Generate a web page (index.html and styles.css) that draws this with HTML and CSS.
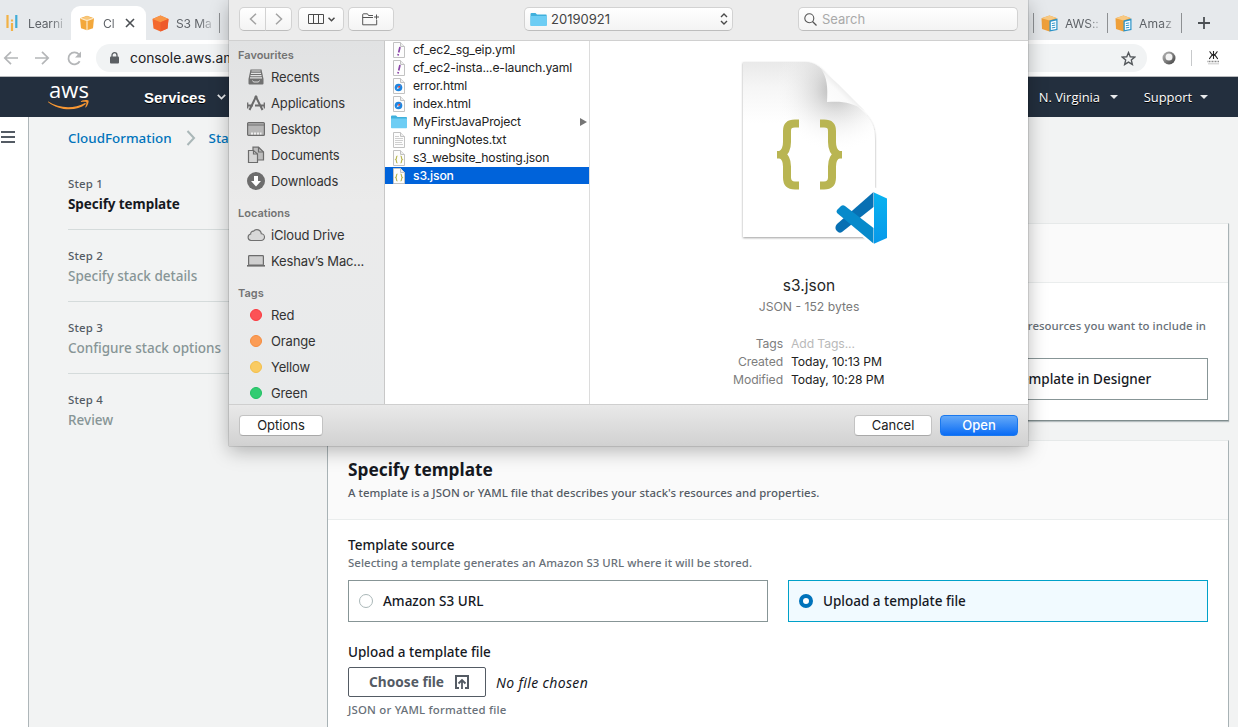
FILE: index.html
```html
<!DOCTYPE html>
<html lang="en">
<head>
<meta charset="utf-8">
<title>CloudFormation - Stack</title>
<link rel="stylesheet" href="styles.css">
</head>
<body>
<div class="browser">
  <div class="tabs">
    <div class="tab tab-first">
      <svg width="12" height="18" viewBox="0 0 12 18"><path d="M1.500 1v13M6 5.500v2M6 9v8" stroke="#f2b246" stroke-width="2.200"/><path d="M10.300 1v13" stroke="#41acd8" stroke-width="2.200"/></svg>
      <span class="tab-title">Learni</span>
    </div>
    <div class="tab tab-active">
      <svg width="16" height="16" viewBox="0 0 16 16"><path d="M8 .8 15 3.300 14 13.300 8 15.300 2 13.300 1 3.300z" fill="#f3a83b"/><path d="M8 1 14 3.400 8 5.200 2 3.400z" fill="#f8c77b"/><path d="M1.500 3.300 8 5.500l6.500-2.200M8 5.500V15" stroke="#fde9c8" stroke-width="1.200" fill="none"/></svg>
      <span class="tab-title tab-title-short">Cl</span>
      <svg class="tab-close" width="10" height="10" viewBox="0 0 10 10"><path d="m1 1 8 8M9 1 1 9" stroke="#4b4f53" stroke-width="1.600"/></svg>
    </div>
    <div class="tab tab-s3">
      <svg width="17" height="17" viewBox="0 0 17 17"><path d="m8.500.5 8 3.500-1 9.500-7 3-7-3L.5 4z" fill="#f4692f"/><path d="m8.500.5 8 3.500-8 3.200L.5 4z" fill="#f99646"/><path d="M8.500 7.200 16.500 4l-1 9.500-7 3z" fill="#ee5a2b"/></svg>
      <span class="tab-title">S3 Ma</span>
    </div>
    <i class="tab-sep"></i>
    <div class="tabs-end">
      <i class="tab-sep"></i>
      <div class="tab tab-doc">
        <svg width="17" height="17" viewBox="0 0 17 17"><path d="M8.500.5 15.500 3l-1 11-6 2.500L1 14 .5 3.300z" fill="#efa03a"/><path d="m8.500.5 7 2.600-7 2.400L.5 3.300z" fill="#f8c982"/><path d="M8.500 5.500 16.500 3.500v11.500l-8 1.500z" fill="#2b93c8"/><path d="m9.800 6.700 5.500-1.300v8.600l-5.500 1z" fill="#fff"/><path d="m10.800 8.500 3.500-.6M10.800 10.700l3.500-.6M10.800 12.900l3.500-.6" stroke="#2b93c8" stroke-width="1"/></svg>
        <span class="tab-title">AWS::</span>
      </div>
      <i class="tab-sep"></i>
      <div class="tab tab-doc">
        <svg width="17" height="17" viewBox="0 0 17 17"><path d="M8.500.5 15.500 3l-1 11-6 2.500L1 14 .5 3.300z" fill="#efa03a"/><path d="m8.500.5 7 2.600-7 2.400L.5 3.300z" fill="#f8c982"/><path d="M8.500 5.500 16.500 3.500v11.500l-8 1.500z" fill="#2b93c8"/><path d="m9.800 6.700 5.500-1.300v8.600l-5.500 1z" fill="#fff"/><path d="m10.800 8.500 3.500-.6M10.800 10.700l3.500-.6M10.800 12.900l3.500-.6" stroke="#2b93c8" stroke-width="1"/></svg>
        <span class="tab-title tab-title-amz">Amaz</span>
      </div>
      <i class="tab-sep"></i>
      <svg class="tab-add" width="12" height="12" viewBox="0 0 12 12"><path d="M6 0v12M0 6h12" stroke="#4c5054" stroke-width="1.800"/></svg>
    </div>
  </div>

  <div class="address-row">
    <svg class="nav-back" width="15" height="14" viewBox="0 0 15 14"><path d="M15 7H2M8 .8 1.800 7 8 13.200" fill="none" stroke="#b4b6b8" stroke-width="1.700"/></svg>
    <svg class="nav-fwd" width="15" height="14" viewBox="0 0 15 14"><path d="M0 7h13M7 .8 13.200 7 7 13.200" fill="none" stroke="#b4b6b8" stroke-width="1.700"/></svg>
    <svg class="nav-reload" width="15" height="15" viewBox="0 0 15 15"><path d="M12.700 10.300A6 6 0 1 1 11.900 3.300" fill="none" stroke="#b4b6b8" stroke-width="1.800"/><path d="M14 .5v6H8z" fill="#b4b6b8"/></svg>
    <div class="omnibox">
      <svg width="9" height="12" viewBox="0 0 9 12"><rect y="4.500" width="9" height="7" rx="1" fill="#5b5f63"/><path d="M2 5V3.200a2.500 2.500 0 0 1 5 0V5" fill="none" stroke="#5b5f63" stroke-width="1.300"/></svg>
      <span class="url">console.aws.am</span>
      <svg class="star" width="15" height="15" viewBox="0 0 24 24"><path d="m12 2.500 2.800 6.700 7.200.6-5.500 4.700 1.700 7L12 17.700l-6.200 3.800 1.700-7L2 9.800l7.200-.6z" fill="none" stroke="#55595d" stroke-width="2.200"/></svg>
    </div>
    <svg class="ext-ball" width="14" height="14" viewBox="0 0 14 14"><defs><linearGradient id="ball" x1="0" y1="0" x2="1" y2="1"><stop offset=".2" stop-color="#a4a4a4"/><stop offset="1" stop-color="#3d3d3d"/></linearGradient></defs><circle cx="7" cy="7" r="6.500" fill="url(#ball)"/><circle cx="7" cy="6" r="3.500" fill="#f3f3f3"/></svg>
    <i class="ext-sep"></i>
    <svg class="ext-zh" width="13" height="14" viewBox="0 0 13 14"><path d="M6.500 0v8M2.500.5c1 0 1 3.400 3.800 3.400C3.500 4 3.300 7.800 2 7.800M10.500.5c-1 0-1 3.400-3.800 3.400C9.500 4 9.700 7.800 11 7.800" fill="none" stroke="#222" stroke-width="1.100"/><path d="M.5 10.500h12" stroke="#8a8a8a" stroke-width="1.600" stroke-dasharray="1 .5"/><path d="M1 12.800h11" stroke="#bbb" stroke-width=".8"/></svg>
  </div>
</div>

<div class="aws-nav">
  <div class="aws-logo">
    <span class="aws-word">aws</span>
    <svg width="42" height="11" viewBox="0 0 42 11"><path d="M.3 1.500C11 8.500 26 9 36.500 3.200c1-.5 1.800.5 1 1.100C29 11.500 11 11.200.3 2.300c-.6-.5-.4-1 0-.8z" fill="#f79733"/><path d="M33 1.200c2-1.400 7-1.600 7.500-.6.500 1.100-.7 5-2.500 6.700-.5.400-.9.200-.7-.3.700-1.800 1.500-4.100 1-4.700-.6-.700-3.200-.500-4.900-.300-.6.100-.8-.500-.400-.800z" fill="#f79733"/></svg>
  </div>
  <span class="services">Services</span>
  <svg class="services-caret" width="9" height="6" viewBox="0 0 9 6"><path d="m.8.8 3.700 3.700L8.200.8" fill="none" stroke="#e8eaec" stroke-width="1.700"/></svg>
  <span class="nav-item nav-region">N. Virginia</span><i class="caret"></i>
  <span class="nav-item nav-support">Support</span><i class="caret"></i>
</div>

<div class="page">
  <div class="rail">
    <svg width="14" height="12" viewBox="0 0 14 12"><path d="M0 1h14M0 6h14M0 11h14" stroke="#545b64" stroke-width="2"/></svg>
  </div>
  <div class="steps">
    <div class="crumbs">
      <span class="crumb">CloudFormation</span>
      <svg width="10" height="16" viewBox="0 0 10 16"><path d="m1.500 1 6.500 7-6.500 7" fill="none" stroke="#aab7b8" stroke-width="2"/></svg>
      <span class="crumb">Stacks</span>
    </div>
    <div class="step step-current"><div class="step-no">Step 1</div><div class="step-name">Specify template</div></div>
    <div class="step"><div class="step-no">Step 2</div><div class="step-name">Specify stack details</div></div>
    <div class="step"><div class="step-no">Step 3</div><div class="step-name">Configure stack options</div></div>
    <div class="step"><div class="step-no">Step 4</div><div class="step-name">Review</div></div>
  </div>
  <div class="main">
    <div class="card card-prepare">
      <div class="card-head"></div>
      <div class="card-body">
        <div class="hint hint-end">resources you want to include in</div>
        <div class="tiles tiles-three">
          <div class="tile tile-designer"><span class="tile-label">Create template in Designer</span></div>
        </div>
      </div>
    </div>
    <div class="card card-specify">
      <div class="card-head">
        <div class="card-title">Specify template</div>
        <div class="card-desc">A template is a JSON or YAML file that describes your stack's resources and properties.</div>
      </div>
      <div class="card-body">
        <div class="label label-source">Template source</div>
        <div class="hint hint-source">Selecting a template generates an Amazon S3 URL where it will be stored.</div>
        <div class="tiles">
          <div class="tile"><i class="radio"></i><span class="tile-label">Amazon S3 URL</span></div>
          <div class="tile tile-on"><i class="radio radio-on"></i><span class="tile-label">Upload a template file</span></div>
        </div>
        <div class="label label-upload">Upload a template file</div>
        <div class="upload">
          <div class="choose"><span>Choose file</span>
            <svg width="14" height="14" viewBox="0 0 14 14"><path d="M4 13H1V1h12v12h-3" fill="none" stroke="#545b64" stroke-width="2"/><path d="M7 14V5.500M3.500 8.500 7 5l3.500 3.500" fill="none" stroke="#545b64" stroke-width="1.800"/></svg>
          </div>
          <span class="no-file">No file chosen</span>
        </div>
        <div class="hint hint-format">JSON or YAML formatted file</div>
      </div>
    </div>
  </div>
</div>

<div class="dialog">
  <div class="toolbar">
    <div class="tb-btn tb-back"><svg width="8" height="12" viewBox="0 0 8 12"><path d="M7 .8 1.500 6 7 11.200" fill="none" stroke="#a3a3a3" stroke-width="1.500"/></svg></div>
    <div class="tb-btn tb-fwd"><svg width="8" height="12" viewBox="0 0 8 12"><path d="M1 .8 6.500 6 1 11.200" fill="none" stroke="#a3a3a3" stroke-width="1.500"/></svg></div>
    <div class="tb-btn tb-view">
      <svg width="16" height="10" viewBox="0 0 16 10"><path d="M.5.5h15v9H.5zM5.500.5v9M10.500.5v9" fill="none" stroke="#4a4a4a"/></svg>
      <svg width="7" height="5" viewBox="0 0 7 5"><path d="m.5.8 3 3 3-3" fill="none" stroke="#4a4a4a" stroke-width="1.500"/></svg>
    </div>
    <div class="tb-btn tb-new"><svg width="18" height="13" viewBox="0 0 18 13"><path d="M11 2.500H6.500L5.500.800H1.500Q.7.800.7 1.800v10h14V7M.7 4.500H11M14.500 1.500v5M12 4h5" fill="none" stroke="#555"/></svg></div>
    <div class="tb-btn tb-folder">
      <svg width="17" height="15" viewBox="0 0 17 15"><path d="M.5 2Q.5 1 1.500 1h4l1.500 1.500h9q.7 0 .7.700V13.500H.5z" fill="#3fb0dc"/><path d="M.5 4h16.200v9.300q0 .7-.7.700H1.200q-.7 0-.7-.7z" fill="#6dcdf4"/></svg>
      <span>20190921</span>
      <svg class="updown" width="8" height="12" viewBox="0 0 8 12"><path d="m1 4 3-3 3 3M1 8l3 3 3-3" fill="none" stroke="#4a4a4a" stroke-width="1.400"/></svg>
    </div>
    <div class="tb-btn tb-search">
      <svg width="13" height="13" viewBox="0 0 13 13"><circle cx="5.300" cy="5.300" r="4.500" fill="none" stroke="#555" stroke-width="1.100"/><path d="m8.500 8.500 4 4" stroke="#555" stroke-width="1.300"/></svg>
      <span>Search</span>
    </div>
  </div>
  <div class="panes">
    <div class="sidebar">
      <div class="side-head">Favourites</div>
      <div class="side-item"><svg width="18" height="18" viewBox="0 0 18 18"><path d="M3.500 1.500h11l2 9.500v4.500q0 1-1 1h-13q-1 0-1-1V11z" fill="#717171"/><path d="M4.500 3h9M4 5.300h10M3.500 7.600h11M3 9.900h12" stroke="#e2e2e2" stroke-width="1.200"/><path d="M5.500 12.500q.5 1.500 1.500 1.500h4q1 0 1.500-1.500" stroke="#ddd" fill="none"/></svg>Recents</div>
      <div class="side-item"><svg width="18" height="18" viewBox="0 0 18 18"><path d="M9.300 2 2.500 16M8.500 2 15.500 16M1 11.500h5M8 11.500h9" fill="none" stroke="#6b6b6b" stroke-width="2"/><path d="M.7 8.500v6M17.300 8.500v6" stroke="#6b6b6b" stroke-width="1.300"/><circle cx="9" cy="3" r="1.500" fill="#6b6b6b"/></svg>Applications</div>
      <div class="side-item"><svg width="18" height="18" viewBox="0 0 18 18"><rect x=".6" y="2.600" width="16.800" height="12.800" rx="1" fill="#b6b6b6" stroke="#6c6c6c" stroke-width="1.200"/><path d="M1 5h16" stroke="#6c6c6c"/><path d="M4 13.500h2M7 13.500h2M10 13.500h2M13 13.500h1.500" stroke="#eee" stroke-width="2"/></svg>Desktop</div>
      <div class="side-item"><svg width="18" height="18" viewBox="0 0 18 18"><path d="M6 1.200h5.500L16.500 6v8H6z" fill="#bdbdbd" stroke="#6c6c6c" stroke-width="1.200"/><path d="M11.500 1.200V6h5" fill="none" stroke="#6c6c6c" stroke-width="1.200"/><path d="M1.500 4.500h5L10.500 8v8.500h-9z" fill="#d5d5d5" stroke="#6c6c6c" stroke-width="1.200"/><path d="M6.500 4.500V8h4" fill="none" stroke="#6c6c6c" stroke-width="1.200"/></svg>Documents</div>
      <div class="side-item"><svg width="18" height="18" viewBox="0 0 18 18"><circle cx="9" cy="9" r="9" fill="#6d6d6d"/><path d="M7 4h4v5h3l-5 5.500L4 9h3z" fill="#fff"/></svg>Downloads</div>
      <div class="side-head side-gap">Locations</div>
      <div class="side-item"><svg width="18" height="18" viewBox="0 0 18 18"><path d="M4 14.500a3.300 3.300 0 0 1-.3-6.500 2.500 2.500 0 0 1 3-2.800 4.300 4.300 0 0 1 7.600 2.600 3.300 3.300 0 0 1-.3 6.700z" fill="#d8d8d8" stroke="#717171" stroke-width="1.100"/></svg>iCloud Drive</div>
      <div class="side-item"><svg width="18" height="18" viewBox="0 0 18 18"><rect x="1.600" y="3.600" width="14.800" height="9.500" rx=".8" fill="#cfcfcf" stroke="#6c6c6c" stroke-width="1.200"/><path d="M0 13.800h18" stroke="#6c6c6c" stroke-width="1.600"/></svg>Keshav’s Mac...</div>
      <div class="side-head side-gap">Tags</div>
      <div class="side-item"><i class="dot dot-red"></i>Red</div>
      <div class="side-item"><i class="dot dot-orange"></i>Orange</div>
      <div class="side-item"><i class="dot dot-yellow"></i>Yellow</div>
      <div class="side-item"><i class="dot dot-green"></i>Green</div>
    </div>
    <div class="files">
      <div class="file"><svg width="16" height="16" viewBox="0 0 16 16"><path d="M2.500.5h7l4 4v11h-11z" fill="#fdfdfd" stroke="#c2c2c2"/><path d="M9.500.5v4h4" fill="#eee" stroke="#c2c2c2"/><path d="m9 5-1.300 5.500M7.300 12l-.3 1.500" stroke="#8a45a8" stroke-width="1.700"/></svg>cf_ec2_sg_eip.yml</div>
      <div class="file"><svg width="16" height="16" viewBox="0 0 16 16"><path d="M2.500.5h7l4 4v11h-11z" fill="#fdfdfd" stroke="#c2c2c2"/><path d="M9.500.5v4h4" fill="#eee" stroke="#c2c2c2"/><path d="m9 5-1.300 5.500M7.300 12l-.3 1.500" stroke="#8a45a8" stroke-width="1.700"/></svg>cf_ec2-insta...e-launch.yaml</div>
      <div class="file"><svg width="16" height="16" viewBox="0 0 16 16"><path d="M2.500.5h7l4 4v11h-11z" fill="#fdfdfd" stroke="#c2c2c2"/><path d="M9.500.5v4h4" fill="#eee" stroke="#c2c2c2"/><circle cx="7.500" cy="9.500" r="3.800" fill="#1d85e0"/><path d="M9.500 7.500 8.200 10.200 5.500 11.500l1.300-2.700z" fill="#cfe5f8"/><path d="M9.700 7.300 8.200 10.200 6.800 8.800z" fill="#e5382c"/></svg>error.html</div>
      <div class="file"><svg width="16" height="16" viewBox="0 0 16 16"><path d="M2.500.5h7l4 4v11h-11z" fill="#fdfdfd" stroke="#c2c2c2"/><path d="M9.500.5v4h4" fill="#eee" stroke="#c2c2c2"/><circle cx="7.500" cy="9.500" r="3.800" fill="#1d85e0"/><path d="M9.500 7.500 8.200 10.200 5.500 11.500l1.300-2.700z" fill="#cfe5f8"/><path d="M9.700 7.300 8.200 10.200 6.800 8.800z" fill="#e5382c"/></svg>index.html</div>
      <div class="file"><svg width="16" height="16" viewBox="0 0 16 16"><path d="M0 2.500q0-1 1-1h4L6.500 3H15q1 0 1 .8V13H0z" fill="#3fb0dc"/><path d="M0 4.500h16v9q0 .8-.8.800H.8q-.8 0-.8-.8z" fill="#6dcdf4"/></svg>MyFirstJavaProject<i class="expand"></i></div>
      <div class="file"><svg width="16" height="16" viewBox="0 0 16 16"><path d="M2.500.5h7l4 4v11h-11z" fill="#fdfdfd" stroke="#c2c2c2"/><path d="M9.500.5v4h4" fill="#eee" stroke="#c2c2c2"/><path d="M4 4.500h4M4 6.500h8M4 8.500h8M4 10.500h7M4 12.500h8" stroke="#cfcfcf"/></svg>runningNotes.txt</div>
      <div class="file"><svg width="16" height="16" viewBox="0 0 16 16"><path d="M2.500.5h7l4 4v11h-11z" fill="#fdfdfd" stroke="#c2c2c2"/><path d="M9.500.5v4h4" fill="#eee" stroke="#c2c2c2"/><path d="M6.500 6Q5.500 6 5.500 7.500T4.700 9.500q.8.500.8 2t1 1.500M9.500 6q1 0 1 1.500t.8 2q-.8.500-.8 2t-1 1.500" fill="none" stroke="#b9b652" stroke-width="1.200"/></svg>s3_website_hosting.json</div>
      <div class="file file-on"><svg width="16" height="16" viewBox="0 0 16 16"><path d="M2.500.5h7l4 4v11h-11z" fill="#fdfdfd" stroke="#c2c2c2"/><path d="M9.500.5v4h4" fill="#eee" stroke="#c2c2c2"/><path d="M6.500 6Q5.500 6 5.500 7.500T4.700 9.500q.8.500.8 2t1 1.500M9.500 6q1 0 1 1.500t.8 2q-.8.500-.8 2t-1 1.500" fill="none" stroke="#b9b652" stroke-width="1.200"/></svg>s3.json</div>
    </div>
    <div class="preview">
      <svg class="doc" width="160" height="192" viewBox="0 0 160 192">
        <defs>
          <linearGradient id="sheet" x1="0" y1="0" x2="0" y2="1"><stop offset="0" stop-color="#e9e9e9"/><stop offset=".15" stop-color="#f6f6f6"/><stop offset=".35" stop-color="#fff"/></linearGradient>
          <radialGradient id="fold" gradientUnits="userSpaceOnUse" cx="100" cy="34" r="62"><stop offset="0" stop-color="#999" stop-opacity=".75"/><stop offset=".35" stop-color="#c0c0c0" stop-opacity=".45"/><stop offset="1" stop-color="#fff" stop-opacity="0"/></radialGradient>
          <linearGradient id="curl" x1="0" y1="1" x2=".7" y2=".3"><stop offset="0" stop-color="#fff"/><stop offset=".6" stop-color="#fafafa"/><stop offset="1" stop-color="#d5d5d5"/></linearGradient>
          <linearGradient id="code" x1="0" y1="0" x2="0" y2="1"><stop offset="0" stop-color="#09b3f0"/><stop offset="1" stop-color="#0799ea"/></linearGradient>
          <filter id="drop" x="-10%" y="-10%" width="120%" height="120%"><feDropShadow dx="0" dy="1" stdDeviation="1.200" flood-color="#000" flood-opacity=".38"/></filter>
        </defs>
        <path d="M7 6h61c13 0 18 7 26 16l23 24c16 15 22 20 22 38v97H7z" fill="url(#sheet)" filter="url(#drop)"/>
        <path d="M7 6h61c13 0 18 7 26 16l23 24c16 15 22 20 22 38v97H7z" fill="url(#fold)"/>
        <path d="M85 13c6 8 7 18 6 33 15-1 25 0 38 9L102 28z" fill="url(#curl)"/>
        <path d="M63 67.500h-4q-8 0-8 7.500v11q0 9.500-6 12.500 6 3 6 12v11q0 8 8 8h4" fill="none" stroke="#b9b552" stroke-width="8" stroke-linejoin="bevel"/>
        <path d="M84 67.500h4q8 0 8 7.500v11q0 9.500 6 12.500-6 3-6 12v11q0 8-8 8h-4" fill="none" stroke="#b9b552" stroke-width="8" stroke-linejoin="bevel"/>
        <path d="M41 95h6v7.500h-6zM106 95h-6v7.500h6z" fill="#b9b552"/>
        <path d="M99 147 107 142 117 148 138 131 155 139v43l-17 9-23-20-8 7-9-7z" fill="#fff"/>
        <path d="m101 168 36.500-32v15L106 176q-2 1.500-4 0l-2-2q-1.500-3 1-6z" fill="#0870b3"/>
        <path d="m101 154 4-4q2-1.500 4 0l28.500 22v15.500L101 157q-1-1.500 0-3z" fill="#078acb"/>
        <path d="M138 136.500 151 142.500v39.500l-13 5.700z" fill="url(#code)"/>
      </svg>
      <div class="pv-name">s3.json</div>
      <div class="pv-kind">JSON - 152 bytes</div>
      <div class="pv-meta">
        <span class="k">Tags</span><span class="v add">Add Tags...</span>
        <span class="k">Created</span><span class="v">Today, 10:13 PM</span>
        <span class="k">Modified</span><span class="v">Today, 10:28 PM</span>
      </div>
    </div>
  </div>
  <div class="foot">
    <div class="btn btn-options">Options</div>
    <div class="btn btn-cancel">Cancel</div>
    <div class="btn btn-open">Open</div>
  </div>
</div>
</body>
</html>
```

FILE: styles.css
```css
* { box-sizing: border-box; }
html, body { margin: 0; height: 727px; overflow: hidden; }
body { position: relative; width: 1238px; background: #f2f3f3; font-family: "Noto Sans", sans-serif; display: flex; flex-direction: column; }
svg { display: block; flex: none; }
span, div { white-space: nowrap; }

/* Browser chrome */
.browser { flex: none; height: 77px; border-bottom: 1px solid #b9bbbe; background: #fff; font-family: Inter, sans-serif; }
.tabs { height: 40px; background: #e6e9ec; display: flex; align-items: center; padding-top: 6px; }
.tab { height: 34px; display: flex; align-items: center; flex: none; color: #5f6368; font-size: 12.100px; letter-spacing: -.15px; }
.tab-first { width: 71px; padding-left: 6px; gap: 10px; }
.tab-active { width: 75px; background: #fff; border-radius: 9px 9px 0 0; padding-left: 8px; }
.tab-title { width: 38px; -webkit-mask-image: linear-gradient(90deg, #000 60%, rgba(0,0,0,.15)); mask-image: linear-gradient(90deg, #000 60%, rgba(0,0,0,.15)); }
.tab-title-short { width: 16px; margin-left: 8px; }
.tab-title-amz { letter-spacing: .2px; }
.tab-close { margin-left: 6px; }
.tab-s3 { width: 73px; padding-left: 6px; gap: 7px; }
.tab-sep { width: 1px; height: 20px; background: #8d9093; flex: none; }
.tabs-end { margin-left: auto; display: flex; align-items: center; width: 205px; }
.tab-doc { width: 73px; padding-left: 7px; gap: 7px; }
.tab-add { margin-left: 16px; }
.address-row { height: 36px; display: flex; align-items: center; }
.nav-back { margin-left: 3px; }
.nav-fwd { margin-left: 17px; }
.nav-reload { margin-left: 17px; }
.omnibox { margin-left: 14px; width: 1051px; height: 28px; border-radius: 14px; background: #f1f3f4; display: flex; align-items: center; padding: 0 11px 0 14px; }
.url { margin-left: 11px; font-size: 13.800px; color: #202124; }
.star { margin-left: auto; }
.ext-ball { margin-left: 15px; }
.ext-sep { margin-left: 15px; width: 1px; height: 16px; background: #c7c9cb; }
.ext-zh { margin-left: 15px; }

/* Console navigation */
.aws-nav { flex: none; height: 40px; background: #232f3e; display: flex; align-items: center; color: #fff; }
.aws-logo { width: 42px; margin-left: 48px; height: 27px; display: flex; flex-direction: column; align-items: center; }
.aws-word { font: 500 22px/10px "Open Sans", sans-serif; height: 16px; }
.services { margin-left: 54px; font: bold 15px "Liberation Sans", sans-serif; text-shadow: 0 1px 0 #000; }
.services-caret { margin-left: 11px; }
.nav-item { font-family: "Open Sans", sans-serif; font-size: 12.900px; text-shadow: 0 1px 0 #000; }
.nav-region { margin-left: 813px; width: 63px; }
.nav-support { margin-left: 26px; width: 48px; }
.caret { margin-left: 8px; border: 4px solid transparent; border-top-color: #e8eaec; border-bottom: 0; }

/* Console page */
.page { flex: 1; display: flex; min-height: 0; }
.rail { width: 29px; background: #fff; border-right: 1px solid #aeb6b9; padding: 14px 0 0 1px; flex: none; }
.steps { width: 299px; padding: 11px 39px 0 39px; flex: none; }
.crumbs { display: flex; align-items: center; height: 20px; color: #0073bb; font-size: 13.400px; font-weight: 500; }
.crumbs svg { margin: 0 13px 0 14px; }
.step { height: 72px; border-bottom: 1px solid #d5dbdb; padding-top: 17px; }
.step-current { margin-top: 10px; }
.step:last-child { border-bottom: 0; }
.step-no { font-size: 11.400px; line-height: 18px; color: #545b64; letter-spacing: .2px; font-weight: 500; }
.step-name { font-size: 13.500px; line-height: 22px; color: #879596; font-weight: 500; }
.step-current .step-name { font-weight: 700; color: #16191f; letter-spacing: -.08px; }
.main { width: 902px; padding-top: 106px; }
.card { background: #fff; border-top: 1px solid #e6e9e9; border-right: 1px solid #a8b2b5; border-left: 1px solid #a8b2b5; width: 902px; margin-left: -1px; }
.card-prepare { height: 198px; border-bottom: 1px solid #7f8c8d; box-shadow: 0 1px 1px rgba(0,28,36,.25); }
.card-prepare .card-head { height: 59px; }
.card-head { background: #fafafa; border-bottom: 1px solid #eaeded; }
.card-body { padding: 0 20px; }
.hint { font-size: 11.400px; line-height: 18px; color: #687078; font-weight: 500; letter-spacing: .06px; }
.hint-end { text-align: right; padding: 0 2px 0 0; margin-top: 34px; }
.tiles { display: grid; grid-template-columns: 1fr 1fr; gap: 20px; }
.tiles-three { grid-template-columns: 1fr 1fr 1fr; margin-top: 23px; }
.tile { height: 42px; border: 1px solid #879596; display: flex; align-items: center; padding-left: 10px; }
.tile-designer { grid-column: 3; padding-left: 34px; }
.tile-label { font-size: 13.500px; color: #16191f; font-weight: 500; }
.tile-on { background: #f1faff; border-color: #00a1c9; }
.radio { width: 14px; height: 14px; border: 1px solid #aab7b8; border-radius: 50%; margin-right: 10px; flex: none; }
.radio-on { border: 4px solid #0073bb; background: #fff; }
.card-specify { height: 300px; margin-top: 19px; }
.card-specify .card-head { height: 79px; padding: 16px 20px 0; }
.card-title { font-size: 17.300px; line-height: 26px; font-weight: 700; color: #16191f; }
.card-desc { font-size: 11.400px; line-height: 18px; color: #545b64; font-weight: 500; letter-spacing: .04px; margin-top: 1px; }
.label { font-size: 13.500px; line-height: 18px; color: #16191f; font-weight: 500; }
.label-source { margin-top: 16px; }
.hint-source { margin-bottom: 8px; }
.label-upload { margin-top: 21px; }
.upload { display: flex; align-items: center; margin-top: 6px; }
.choose { width: 138px; height: 30px; border: 1px solid #545b64; border-radius: 2px; display: flex; align-items: center; padding-left: 20px; font-size: 13.700px; line-height: 26px; padding-bottom: 1px; font-weight: 700; color: #545b64; }
.choose svg { margin-left: auto; margin-right: 16px; }
.no-file { margin-left: 10px; font-size: 14px; font-style: italic; color: #16191f; letter-spacing: .35px; }
.hint-format { margin-top: 4px; letter-spacing: .2px; }

/* File dialog */
.dialog { position: absolute; left: 229px; top: 0; width: 799px; height: 446px; background: #ececec; font-family: Inter, sans-serif; font-size: 12.500px; color: #262626; box-shadow: 0 0 1px rgba(0,0,0,.6), 0 5px 18px rgba(0,0,0,.28); display: flex; flex-direction: column; }
.toolbar { height: 41px; border-bottom: 1px solid #d0d0d0; display: flex; padding: 7px 10px 0; flex: none; }
.tb-btn { height: 24px; background: linear-gradient(#fff, #f4f4f4); border: 1px solid #d2d2d2; border-bottom-color: #bdbdbd; border-radius: 5px; display: flex; align-items: center; justify-content: center; flex: none; }
.tb-back { width: 27px; border-radius: 5px 0 0 5px; }
.tb-fwd { width: 27px; margin-left: -1px; border-radius: 0 5px 5px 0; }
.tb-view { width: 46px; margin-left: 6px; gap: 4px; }
.tb-new { width: 46px; margin-left: 4px; }
.tb-folder { width: 209px; margin-left: 130px; justify-content: flex-start; padding-left: 5px; gap: 4px; font-size: 13px; color: #444; }
.updown { margin-left: auto; margin-right: 4px; }
.tb-search { width: 220px; margin-left: 65px; justify-content: flex-start; padding-left: 5px; gap: 5px; font-size: 13px; color: #a9a9a9; }
.panes { height: 363px; display: flex; flex: none; background: #fff; }
.sidebar { width: 156px; background: linear-gradient(#e1e2e3, #ebebeb 45%, #e8eaeb); border-right: 1px solid #c8c8c8; padding-top: 4px; overflow: hidden; flex: none; }
.side-head { height: 19px; line-height: 21px; padding-left: 9px; font-size: 11px; font-weight: 600; color: #737373; }
.side-gap { margin-top: 9px; }
.side-item { height: 26px; display: flex; align-items: center; padding-left: 18px; gap: 6px; font-size: 13px; letter-spacing: -.15px; color: #333; }
.dot { width: 12px; height: 12px; border-radius: 50%; margin: 0 3px; }
.dot-red { background: #fc5256; border: 1px solid #fb3a40; }
.dot-orange { background: #fb9c56; border: 1px solid #f58c3e; }
.dot-yellow { background: #f9cb62; border: 1px solid #f3bf4a; }
.dot-green { background: #32cc72; border: 1px solid #1fc062; }
.files { width: 205px; border-right: 1px solid #dcdcdc; flex: none; }
.file { height: 17px; margin-bottom: 1px; display: flex; align-items: center; padding-left: 6px; gap: 6px; font-size: 12.200px; letter-spacing: -.17px; color: #222; }
.file-on { background: #0063da; color: #fff; font-weight: 500; }
.expand { margin-left: auto; margin-right: 2px; border: 4px solid transparent; border-left: 7px solid #757575; border-right: 0; }
.preview { flex: 1; display: flex; flex-direction: column; align-items: center; padding-top: 15px; }
.doc { margin-left: 14px; }
.pv-name { margin-top: 27px; font-size: 15.500px; line-height: 22px; }
.pv-kind { line-height: 20px; color: #7a7a7a; font-size: 12.200px; }
.pv-meta { display: grid; grid-template-columns: 193px 1fr; column-gap: 8px; width: 438px; margin-top: 18px; line-height: 18px; font-size: 12.200px; letter-spacing: -.1px; }
.k { text-align: right; color: #7d7d7d; }
.v { color: #222; }
.add { color: #b9b9b9; }
.foot { height: 42px; border-top: 1px solid #cfcfcf; background: linear-gradient(#e9e9e9, #d1d1d1); display: flex; padding: 10px 10px 0; }
.btn { height: 21px; border-radius: 4px; background: #fff; border: 1px solid #c3c3c3; border-bottom-color: #a9a9a9; display: flex; align-items: center; justify-content: center; font-size: 13px; line-height: 18px; padding-bottom: 1px; color: #222; }
.btn-options { width: 84px; }
.btn-cancel { width: 78px; margin-left: auto; }
.btn-open { width: 78px; margin-left: 8px; color: #fff; font-weight: 500; border: 1px solid #1a78ee; background: linear-gradient(#64a9f8, #0a6cf5); }
```
